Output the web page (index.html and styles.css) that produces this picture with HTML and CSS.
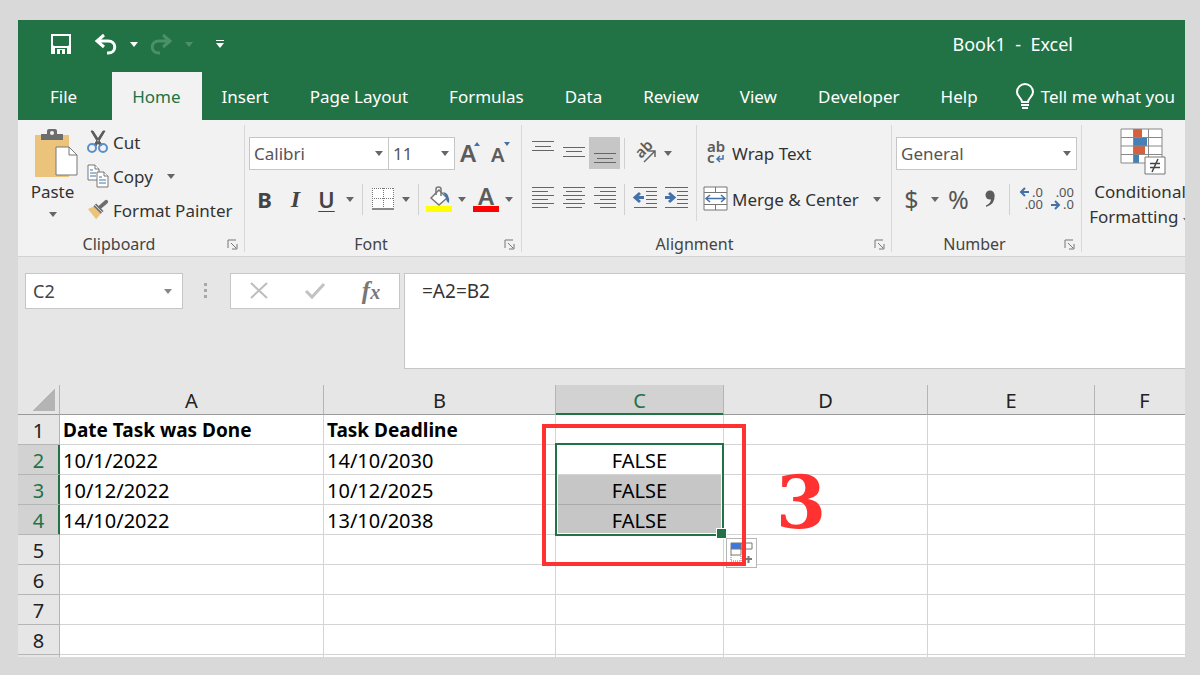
FILE: index.html
```
<!DOCTYPE html>
<html lang="en">
<head>
    <meta charset="UTF-8">
    <meta name="viewport" content="width=device-width, initial-scale=1.0">
    <title>Book1 - Excel</title>
    <link rel="stylesheet" href="styles.css">
</head>
<body>
    <div class="window">
        <header class="title-bar">
            <div class="quick-access">
                <button class="qa-button" aria-label="Save">
                    <svg width="22" height="22" viewBox="0 0 22 22"><path d="M1 1h20v20H1z" fill="#fff"/><path d="M3 3h16v9l-1 1H4l-1-1zM5 15h12v6H5z" fill="#217346"/><path d="M7 16h8v5h-3v-4h-2v4H7z" fill="#fff"/></svg>
                </button>
                <button class="qa-button undo" aria-label="Undo">
                    <svg width="24" height="22" viewBox="0 0 24 22"><path d="M3 8h11c9 0 9 12 0 12h-1M10 2L3 8l7 6" fill="none" stroke="#fff" stroke-width="3"/></svg>
                </button>
                <button class="qa-caret" aria-label="Undo list"><span class="caret"></span></button>
                <button class="qa-button redo" aria-label="Redo" disabled>
                    <svg width="24" height="22" viewBox="0 0 24 22"><path d="M21 8H10C1 8 1 20 10 20h1M14 2l7 6-7 6" fill="none" stroke="#4d9068" stroke-width="3"/></svg>
                </button>
                <button class="qa-caret redo" aria-label="Redo list" disabled><span class="caret"></span></button>
                <button class="qa-caret customize" aria-label="Customize toolbar"><span class="bar"></span><span class="caret"></span></button>
            </div>
            <div class="book-title">Book1&nbsp; -&nbsp; Excel</div>
        </header>

        <nav class="tabs">
            <button class="tab file">File</button>
            <button class="tab active">Home</button>
            <button class="tab">Insert</button>
            <button class="tab">Page Layout</button>
            <button class="tab">Formulas</button>
            <button class="tab">Data</button>
            <button class="tab">Review</button>
            <button class="tab">View</button>
            <button class="tab">Developer</button>
            <button class="tab">Help</button>
            <button class="tab tell-me">
                <svg width="20" height="27" viewBox="0 0 20 27"><path d="M7 19c0-4-5-5-5-10a8 8 0 0 1 16 0c0 5-5 6-5 10zM6 22h8M7 25h6" fill="none" stroke="#fff" stroke-width="2"/></svg>
                Tell me what you
            </button>
        </nav>

        <section class="ribbon">
            <div class="group clipboard">
                <div class="group-body">
                    <button class="paste">
                        <svg width="46" height="50" viewBox="0 0 46 50"><path d="M1 6h34v42H1z" fill="#ecc37b"/><path d="M7 5h6V2q0-2 2-2h6q2 0 2 2v3h6v6H7z" fill="#6d6d6d"/><circle cx="18" cy="4" r="2" fill="#f2f2f2"/><path d="M22 18h13l8 8v20H22z" fill="#fff" stroke="#777"/><path d="M35 18v8h8" fill="none" stroke="#777"/></svg>
                        <span>Paste</span>
                        <span class="caret"></span>
                    </button>
                    <div class="clip-list">
                        <button class="text-button">
                            <svg width="22" height="24" viewBox="0 0 22 24"><path d="M4 1l2 0 9 14-2 1zM18 1l-2 0L7 15l2 1z" fill="#5c5c5c" stroke="#5c5c5c"/><circle cx="5" cy="18" r="4" fill="none" stroke="#5a8fc8" stroke-width="2"/><circle cx="16" cy="18" r="4" fill="none" stroke="#5a8fc8" stroke-width="2"/></svg>
                            Cut
                        </button>
                        <button class="text-button">
                            <svg width="22" height="24" viewBox="0 0 22 24"><g fill="#fff" stroke="#777"><path d="M1 1h7l4 4v11H1z"/><path d="M8 1v4h4"/><path d="M10 8h7l4 4v11H10z"/><path d="M17 8v4h4"/></g><path d="M3 6h3M3 9h6M3 12h6M12 13h3M12 16h7M12 19h7" stroke="#4472a8" stroke-width="1"/></svg>
                            Copy<span class="caret after"></span>
                        </button>
                        <button class="text-button">
                            <svg width="22" height="22" viewBox="0 0 24 22"><path d="M1 10l7-3 7 8-5 6z" fill="#ecc37b"/><path d="M7 7l3-3 8 8-3 3z" fill="#6d6d6d"/><path d="M13 9l8-7" stroke="#6d6d6d" stroke-width="4" stroke-linecap="round"/><path d="M8 5l9 9" stroke="#f2f2f2"/></svg>
                            Format Painter
                        </button>
                    </div>
                </div>
                <div class="group-footer">
                    <span>Clipboard</span>
                    <button class="launcher" aria-label="Clipboard settings"><svg width="11" height="11" viewBox="0 0 11 11"><path d="M1 9V1h8M4 4l5 5M10 5v5H5" fill="none" stroke="#777"/></svg></button>
                </div>
            </div>

            <div class="group font">
                <div class="group-body rows">
                    <div class="row">
                        <label class="select-box font-name"><select aria-label="Font"><option>Calibri</option></select><span class="caret"></span></label>
                        <label class="select-box font-size"><select aria-label="Font size"><option>11</option></select><span class="caret"></span></label>
                        <button class="tool" aria-label="Increase font size"><svg width="24" height="26" viewBox="0 0 24 26"><text class="big-a" x="1" y="22" font-size="24">A</text><path d="M15 6l3-4 3 4z" fill="#4472a8"/></svg></button>
                        <button class="tool" aria-label="Decrease font size"><svg width="24" height="26" viewBox="0 0 24 26"><text class="big-a" x="1" y="22" font-size="20">A</text><path d="M14 2l3 4 3-4z" fill="#4472a8"/></svg></button>
                    </div>
                    <div class="row">
                        <button class="tool bold">B</button>
                        <button class="tool italic">I</button>
                        <button class="tool underline">U</button>
                        <button class="drop" aria-label="Underline style"><span class="caret"></span></button>
                        <span class="sep"></span>
                        <button class="tool" aria-label="Borders"><svg width="22" height="24" viewBox="0 0 22 24"><path d="M0 1h22v20H0z" fill="#fff"/><path d="M0 1.5h22M.5 1v20M21.5 1v20M11.500 1v20M0 11.500h22" fill="none" stroke="#777" stroke-dasharray="1 1"/><path d="M0 22h22" stroke="#666" stroke-width="1.500"/></svg></button>
                        <button class="drop" aria-label="Border style"><span class="caret"></span></button>
                        <span class="sep"></span>
                        <button class="tool" aria-label="Fill color"><svg width="26" height="27" viewBox="0 0 26 27"><path d="M5 12l8-8 8 8-8 7z" fill="#fff" stroke="#777" stroke-width="1.500"/><path d="M10 9V3q0-2 2.500-2T15 3v7" fill="none" stroke="#777" stroke-width="1.500"/><path d="M17 6q7 1 6 11-3-1-3-6z" fill="#4472a8"/><path d="M0 20h26v6H0z" fill="#ff0"/></svg></button>
                        <button class="drop" aria-label="Fill colors"><span class="caret"></span></button>
                        <button class="tool" aria-label="Font color"><svg width="26" height="27" viewBox="0 0 26 27"><text class="big-a" x="5" y="19" font-size="24">A</text><path d="M0 20h26v6H0z" fill="red"/></svg></button>
                        <button class="drop" aria-label="Font colors"><span class="caret"></span></button>
                    </div>
                </div>
                <div class="group-footer">
                    <span>Font</span>
                    <button class="launcher" aria-label="Font settings"><svg width="11" height="11" viewBox="0 0 11 11"><path d="M1 9V1h8M4 4l5 5M10 5v5H5" fill="none" stroke="#777"/></svg></button>
                </div>
            </div>

            <div class="group alignment">
                <div class="group-body">
                    <div class="rows align-tools">
                        <div class="row">
                            <button class="tool" aria-label="Top align"><svg width="22" height="24" viewBox="0 0 22 24"><path class="lines" d="M0 .5h22M3 5.500h16M0 9.500h22"/></svg></button>
                            <button class="tool" aria-label="Middle align"><svg width="22" height="24" viewBox="0 0 22 24"><path class="lines" d="M0 6.500h22M3 10.500h16M0 15.500h22"/></svg></button>
                            <button class="tool pressed" aria-label="Bottom align"><svg width="22" height="24" viewBox="0 0 22 24"><path class="lines" d="M0 12.500h22M3 17.500h16M0 21.500h22"/></svg></button>
                            <span class="sep"></span>
                            <button class="tool" aria-label="Orientation"><svg width="24" height="24" viewBox="0 0 24 24"><text x="8" y="18" font-size="15" transform="rotate(-45 8 18)" class="big-a">ab</text><path d="M11 21L22 10M16 10h6v6" fill="none" stroke="#666" stroke-width="1.500"/></svg></button>
                            <button class="drop" aria-label="Orientations"><span class="caret"></span></button>
                        </div>
                        <div class="row">
                            <button class="tool" aria-label="Align left"><svg width="22" height="24" viewBox="0 0 22 24"><path class="lines" d="M0 .5h22M0 4.500h16M0 8.500h22M0 12.500h16M0 16.500h22M0 20.500h16"/></svg></button>
                            <button class="tool" aria-label="Center"><svg width="22" height="24" viewBox="0 0 22 24"><path class="lines" d="M0 .5h22M3 4.500h16M0 8.500h22M3 12.500h16M0 16.500h22M3 20.500h16"/></svg></button>
                            <button class="tool" aria-label="Align right"><svg width="22" height="24" viewBox="0 0 22 24"><path class="lines" d="M0 .5h22M6 4.500h16M0 8.500h22M6 12.500h16M0 16.500h22M6 20.500h16"/></svg></button>
                            <span class="sep"></span>
                            <button class="tool" aria-label="Decrease indent"><svg width="24" height="24" viewBox="0 0 24 24"><path class="lines" d="M1 .5h23M13 4.500h11M13 8.500h11M13 12.500h11M13 16.500h11M1 20.500h23"/><path d="M11 10.500H4M7 6l-5 4.500L7 15" fill="none" stroke="#4472a8" stroke-width="3"/></svg></button>
                            <button class="tool" aria-label="Increase indent"><svg width="24" height="24" viewBox="0 0 24 24"><path class="lines" d="M1 .5h23M13 4.500h11M13 8.500h11M13 12.500h11M13 16.500h11M1 20.500h23"/><path d="M1 10.500h7M5 6l5 4.500L5 15" fill="none" stroke="#4472a8" stroke-width="3"/></svg></button>
                        </div>
                    </div>
                    <div class="rows wrap-tools">
                        <button class="text-button">
                            <svg width="26" height="26" viewBox="0 0 26 26"><text x="5" y="12" font-size="15" class="big-a">ab</text><text x="5" y="23" font-size="15" class="big-a">c</text><path d="M21 15v4h-6M18 16l-3 3 3 3" fill="none" stroke="#4472a8" stroke-width="1.500"/></svg>
                            Wrap Text
                        </button>
                        <button class="text-button">
                            <svg width="26" height="26" viewBox="0 0 26 26"><path d="M2 1h23v23H2zM2 6.500h23M2 18.500h23M13.500 1v5M13.500 19v5" fill="#fff" stroke="#777"/><path d="M5 12.500h17M8 9l-4 3.500L8 16M19 9l4 3.500-4 3.500" fill="none" stroke="#4472a8" stroke-width="1.500"/></svg>
                            Merge &amp; Center<span class="caret after"></span>
                        </button>
                    </div>
                </div>
                <div class="group-footer">
                    <span>Alignment</span>
                    <button class="launcher" aria-label="Alignment settings"><svg width="11" height="11" viewBox="0 0 11 11"><path d="M1 9V1h8M4 4l5 5M10 5v5H5" fill="none" stroke="#777"/></svg></button>
                </div>
            </div>

            <div class="group number">
                <div class="group-body rows">
                    <div class="row">
                        <label class="select-box number-format"><select aria-label="Number format"><option>General</option></select><span class="caret"></span></label>
                    </div>
                    <div class="row">
                        <button class="tool symbol">$</button>
                        <button class="drop" aria-label="Currencies"><span class="caret"></span></button>
                        <button class="tool symbol">%</button>
                        <button class="tool" aria-label="Comma style"><svg width="12" height="18" viewBox="0 0 12 18"><circle cx="6" cy="5" r="4.500" fill="#5c5c5c"/><path d="M10.500 5q1 9-8.500 12v-1.500q5-2 5-7z" fill="#5c5c5c"/></svg></button>
                        <span class="sep"></span>
                        <button class="tool" aria-label="Increase decimal"><svg width="26" height="26" viewBox="0 0 26 26"><text class="digits" x="26" y="11">.0</text><text class="digits" x="26" y="23">.00</text><path d="M12 6H4M8 2L4 6l4 4" fill="none" stroke="#4472a8" stroke-width="2"/></svg></button>
                        <button class="tool" aria-label="Decrease decimal"><svg width="26" height="26" viewBox="0 0 26 26"><text class="digits" x="26" y="11">.00</text><text class="digits" x="26" y="23">.0</text><path d="M3 19h8M7 15l4 4-4 4" fill="none" stroke="#4472a8" stroke-width="2"/></svg></button>
                    </div>
                </div>
                <div class="group-footer">
                    <span>Number</span>
                    <button class="launcher" aria-label="Number settings"><svg width="11" height="11" viewBox="0 0 11 11"><path d="M1 9V1h8M4 4l5 5M10 5v5H5" fill="none" stroke="#777"/></svg></button>
                </div>
            </div>

            <div class="group styles">
                <button class="conditional">
                    <svg width="46" height="48" viewBox="0 0 46 48"><path d="M1 1h41v34H1z" fill="#fff"/><path d="M14 1h8v8h-8zM14 18h11v8H14z" fill="#d65f3e"/><path d="M14 10h13v8H14zM14 27h5v8h-5z" fill="#4780b5"/><path d="M1 1h41v34H1zM1 9.500h41M1 18h41M1 26.500h41M13.500 1v34M28.500 1v34" fill="none" stroke="#888"/><path d="M25 29h20v17H25z" fill="#fff" stroke="#777"/><path d="M30 35.500h10M30 39.500h10M38 31l-6 13" stroke="#444" stroke-width="1.500"/></svg>
                    <span>Conditional</span>
                    <span>Formatting <span class="caret"></span></span>
                </button>
            </div>
        </section>

        <section class="formula-bar">
            <div class="name-box">
                <input type="text" value="C2" aria-label="Name box">
                <button class="drop" aria-label="Names"><span class="caret"></span></button>
            </div>
            <svg class="grip" width="5" height="17" viewBox="0 0 5 17"><path d="M1 1h3v3H1zM1 7h3v3H1zM1 13h3v3H1z" fill="#a8a8a8"/></svg>
            <div class="entry-buttons">
                <button aria-label="Cancel"><svg width="20" height="18" viewBox="0 0 20 18"><path d="M2 1l16 15M18 1L2 16" stroke="#bdbdbd" stroke-width="2"/></svg></button>
                <button aria-label="Enter"><svg width="20" height="18" viewBox="0 0 20 18"><path d="M1 9l6 6L19 2" fill="none" stroke="#c2c2c2" stroke-width="3"/></svg></button>
                <button class="fx" aria-label="Insert function">f<small>x</small></button>
            </div>
            <textarea class="formula" aria-label="Formula">=A2=B2</textarea>
        </section>

        <main class="sheet">
            <table class="grid">
                <colgroup>
                    <col class="col-head"><col class="col-a"><col class="col-b"><col class="col-c"><col class="col-d"><col class="col-e"><col class="col-f">
                </colgroup>
                <thead>
                    <tr><th class="corner"></th><th>A</th><th>B</th><th class="selected">C</th><th>D</th><th>E</th><th>F</th></tr>
                </thead>
                <tbody>
                    <tr class="headings"><th>1</th><td>Date Task was Done</td><td>Task Deadline</td><td></td><td></td><td></td><td></td></tr>
                    <tr><th class="selected">2</th><td>10/1/2022</td><td>14/10/2030</td><td class="result">FALSE</td><td></td><td></td><td></td></tr>
                    <tr><th class="selected">3</th><td>10/12/2022</td><td>10/12/2025</td><td class="result shaded">FALSE</td><td></td><td></td><td></td></tr>
                    <tr><th class="selected">4</th><td>14/10/2022</td><td>13/10/2038</td><td class="result shaded">FALSE</td><td></td><td></td><td></td></tr>
                    <tr><th>5</th><td></td><td></td><td></td><td></td><td></td><td></td></tr>
                    <tr><th>6</th><td></td><td></td><td></td><td></td><td></td><td></td></tr>
                    <tr><th>7</th><td></td><td></td><td></td><td></td><td></td><td></td></tr>
                    <tr><th>8</th><td></td><td></td><td></td><td></td><td></td><td></td></tr>
                    <tr><th></th><td></td><td></td><td></td><td></td><td></td><td></td></tr>
                </tbody>
            </table>
            <div class="selection"></div>
            <button class="autofill" aria-label="Auto fill options">
                <svg width="24" height="24" viewBox="0 0 24 24"><path d="M1 2h10v6H1z" fill="#3b78e7"/><path d="M1 2h10v12H1zM1 8h10M11 2h11v6H11z" fill="none" stroke="#777"/><path d="M1 14v6h10v-6" fill="none" stroke="#777" stroke-dasharray="1 1"/><path d="M15 18h7M18.500 15v7" stroke="#777" stroke-width="2"/></svg>
            </button>
            <div class="callout-box"></div>
            <div class="callout-number">3</div>
        </main>
    </div>
</body>
</html>
```
FILE: styles.css
```
* {
    box-sizing: border-box;
}
body {
    margin: 0;
    padding: 20px 15px 18px 18px;
    background-color: #d9d9d9;
    font-family: "Noto Sans", "Open Sans", sans-serif;
    font-size: 18px;
    color: #333;
}
button {
    display: flex;
    align-items: center;
    justify-content: center;
    flex-shrink: 0;
    padding: 0;
    border: none;
    background: none;
    font: inherit;
    color: inherit;
    white-space: nowrap;
}
svg {
    display: block;
    flex-shrink: 0;
    overflow: visible;
}
.window {
    height: calc(100vh - 38px);
    overflow: hidden;
    background-color: #fff;
}
.caret {
    display: inline-block;
    flex-shrink: 0;
    border: 4px solid transparent;
    border-top: 5px solid #666;
    border-bottom: none;
}

/* title bar and tabs */
.title-bar {
    display: flex;
    justify-content: space-between;
    align-items: center;
    height: 52px;
    padding: 0 112px 4px 32px;
    background-color: #217346;
    color: #fff;
}
.quick-access {
    display: flex;
    align-items: center;
}
.quick-access .undo {
    margin-left: 22px;
}
.qa-caret {
    flex-direction: column;
    width: 31px;
    height: 24px;
}
.qa-caret .caret {
    border-top-color: #fff;
}
.redo .caret {
    border-top-color: #4d9068;
}
.qa-caret.customize {
    gap: 2px;
}
.bar {
    width: 8px;
    height: 1px;
    background-color: #fff;
}
.tabs {
    display: flex;
    height: 48px;
    background-color: #217346;
    color: #fff;
    font-size: 17px;
}
.tab {
    padding: 0 21px 0 20px;
}
.tab.file {
    padding: 0 35px 0 32px;
}
.tab.active {
    background-color: #f2f2f2;
    color: #217346;
}
.tab.tell-me {
    gap: 6px;
    padding: 0 0 0 16px;
}

/* ribbon */
.ribbon {
    display: flex;
    height: 137px;
    background-color: #f2f2f2;
    border-bottom: 1px solid #d2d2d2;
    font-size: 17px;
}
.group {
    display: flex;
    flex-direction: column;
    flex-shrink: 0;
}
.group:not(.styles) {
    border-right: 1px solid #d8d8d8;
    margin: 5px 0 4px;
}
.group-body {
    display: flex;
    flex-shrink: 0;
    height: 103px;
}
.group-footer {
    display: flex;
    align-items: center;
    flex-shrink: 0;
    height: 24px;
    padding-top: 8px;
    font-size: 16px;
    color: #444;
}
.group-footer span {
    flex-grow: 1;
    text-align: center;
}
.launcher {
    width: 24px;
    height: 16px;
}
.clipboard {
    width: 227px;
}
.paste {
    flex-direction: column;
    justify-content: flex-start;
    width: 69px;
    padding-top: 4px;
}
.paste svg {
    margin: 0 0 1px 8px;
}
.paste .caret {
    margin-top: 9px;
}
.clip-list .text-button {
    height: 34px;
}
.text-button {
    justify-content: flex-start;
    gap: 4px;
}
.after {
    margin-left: 10px;
}
.rows {
    display: flex;
    flex-direction: column;
    gap: 14px;
    padding-top: 12px;
}
.row {
    display: flex;
    align-items: center;
    height: 32px;
}
.tool {
    width: 31px;
    height: 32px;
    color: #444;
}
.drop {
    width: 16px;
    height: 32px;
}
.sep {
    width: 1px;
    height: 31px;
    margin: 0 4px;
    background-color: #d0d0d0;
}
.pressed {
    background-color: #c6c6c6;
}
.bold, .italic, .underline {
    font-size: 22px;
    font-weight: bold;
    line-height: 28px;
}
.italic {
    font-family: "Liberation Serif", serif;
    font-size: 24px;
    font-style: italic;
}
.underline {
    font-weight: 600;
    text-decoration: underline;
    text-decoration-thickness: 1px;
    text-underline-offset: 3px;
}
.symbol {
    font-size: 25px;
    color: #555;
}
.big-a {
    fill: #5c5c5c;
    font-weight: 600;
}
.digits {
    fill: #555;
    font-size: 13px;
    text-anchor: end;
}
.lines {
    stroke: #666;
}
.select-box {
    display: flex;
    align-items: center;
    height: 33px;
    padding-right: 5px;
    border: 1px solid #c6c6c6;
    background-color: #fff;
}
.select-box select {
    flex-grow: 1;
    min-width: 0;
    padding: 0 4px;
    border: none;
    background: none;
    appearance: none;
    font: inherit;
    color: #555;
}
.font {
    width: 277px;
}
.font .rows {
    padding-left: 4px;
}
.font-name {
    width: 140px;
}
.font-size {
    width: 67px;
    margin-left: -1px;
}
.alignment {
    width: 370px;
}
.align-tools {
    padding-left: 5px;
    padding-right: 5px;
}
.wrap-tools {
    height: 96px;
    padding-left: 5px;
    border-left: 1px solid #d8d8d8;
}
.wrap-tools .text-button {
    height: 32px;
}
.number {
    width: 190px;
}
.number .rows {
    padding-left: 4px;
}
.number-format {
    width: 181px;
}
.conditional {
    flex-direction: column;
    justify-content: flex-start;
    width: 116px;
    padding-top: 8px;
    line-height: 25px;
}
.conditional svg {
    margin: 0 0 3px 6px;
}

/* formula bar */
.formula-bar {
    display: flex;
    align-items: flex-start;
    height: 128px;
    padding: 16px 0 16px 7px;
    background-color: #e6e6e6;
}
.name-box, .entry-buttons {
    display: flex;
    align-items: center;
    height: 36px;
    border: 1px solid #c6c6c6;
    background-color: #fff;
}
.name-box {
    width: 158px;
    padding-right: 6px;
}
.name-box input {
    flex-grow: 1;
    min-width: 0;
    padding: 0 7px;
    border: none;
    background: none;
    font: inherit;
    color: #444;
}
.name-box .caret {
    border-top-color: #888;
}
.grip {
    margin: 9px 22px 0 20px;
}
.entry-buttons {
    width: 170px;
}
.entry-buttons button {
    flex: 1;
}
.entry-buttons .fx {
    align-items: baseline;
    font-family: "Liberation Serif", serif;
    font-size: 25px;
    font-style: italic;
    font-weight: bold;
    line-height: 26px;
    color: #777;
}
.fx small {
    font-size: 20px;
}
.formula {
    flex-grow: 1;
    height: 96px;
    margin-left: 4px;
    padding: 4px 17px;
    border: 1px solid #c6c6c6;
    border-right: none;
    background-color: #fff;
    font: inherit;
    font-size: 19px;
    color: #333;
    resize: none;
}

/* sheet */
.sheet {
    position: relative;
}
.grid {
    width: 1177px;
    table-layout: fixed;
    border-collapse: separate;
    border-spacing: 0;
    font-size: 20px;
    line-height: 27px;
    color: #000;
}
.col-head { width: 42px; }
.col-a { width: 264px; }
.col-b { width: 232px; }
.col-c { width: 168px; }
.col-d { width: 204px; }
.col-e { width: 167px; }
.col-f { width: 100px; }
.grid th, .grid td {
    height: 30px;
    padding: 2px 3px 0;
    border-right: 1px solid #d4d4d4;
    border-bottom: 1px solid #d4d4d4;
    white-space: nowrap;
}
.grid th {
    border-color: #b5b5b5;
    background-color: #e6e6e6;
    font-weight: normal;
    color: #222;
}
.grid thead th {
    padding-top: 2px;
    border-bottom-color: #999;
}
.grid .corner {
    background-image: linear-gradient(135deg, transparent 50%, #b4b4b4 50%);
    background-size: 22px 22px;
    background-position: 15px 4px;
    background-repeat: no-repeat;
}
.grid th.selected {
    background-color: #d2d2d2;
    color: #217346;
}
.grid thead .selected {
    border-bottom: 1px solid #217346;
    box-shadow: inset 0 -1px #217346;
}
.grid tbody .selected {
    border-right-color: #217346;
    box-shadow: inset -1px 0 #217346;
}
.headings td {
    font-size: 19px;
    font-weight: bold;
}
.grid .result {
    text-align: center;
}
.grid .shaded {
    background-color: #c6c6c6;
    border-bottom-color: #aaa;
}
.selection {
    position: absolute;
    left: 537px;
    top: 58px;
    width: 169px;
    height: 93px;
    border: 2px solid #217346;
    box-shadow: inset 0 0 0 1px #fff;
}
.selection::after {
    content: "";
    position: absolute;
    right: -5px;
    bottom: -5px;
    width: 9px;
    height: 9px;
    border: 1px solid #fff;
    background-color: #217346;
}
.autofill {
    position: absolute;
    left: 708px;
    top: 153px;
    width: 31px;
    height: 30px;
    border: 1px solid #b5b5b5;
    background-color: #fff;
}
.callout-box {
    position: absolute;
    left: 524px;
    top: 39px;
    width: 204px;
    height: 142px;
    border: 4px solid #ff3131;
}
.callout-number {
    position: absolute;
    left: 758px;
    top: 76px;
    font-family: "DejaVu Serif", serif;
    font-size: 72px;
    font-weight: bold;
    line-height: 84px;
    color: #ff3131;
}
```
